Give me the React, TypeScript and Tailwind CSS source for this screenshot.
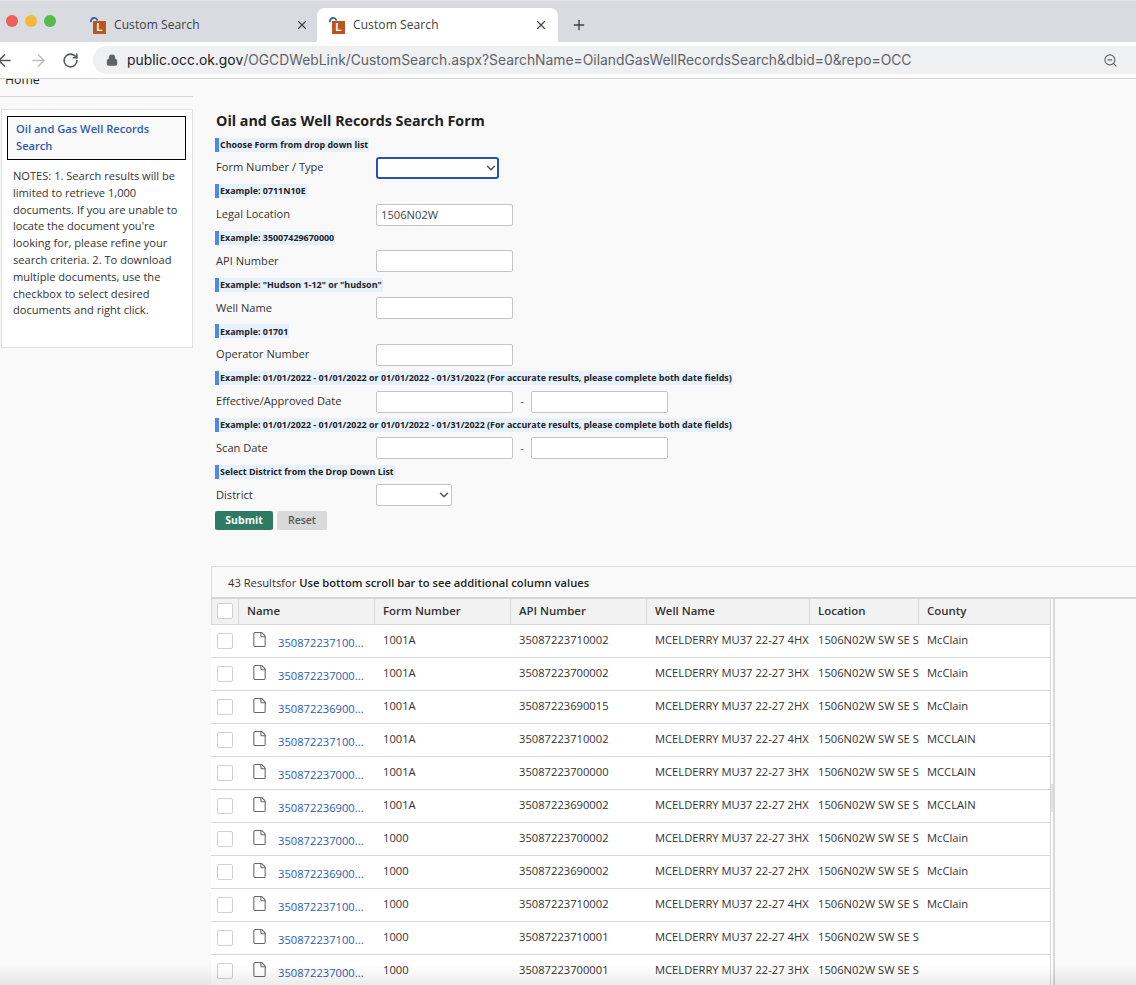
import { ArrowLeft, ArrowRight, ChevronDown, File, Lock, Plus, RotateCw, X, ZoomOut } from "lucide-react";

const rows = [
  ["350872237100...", "1001A", "35087223710002", "MCELDERRY MU37 22-27 4HX", "McClain"],
  ["350872237000...", "1001A", "35087223700002", "MCELDERRY MU37 22-27 3HX", "McClain"],
  ["350872236900...", "1001A", "35087223690015", "MCELDERRY MU37 22-27 2HX", "McClain"],
  ["350872237100...", "1001A", "35087223710002", "MCELDERRY MU37 22-27 4HX", "MCCLAIN"],
  ["350872237000...", "1001A", "35087223700000", "MCELDERRY MU37 22-27 3HX", "MCCLAIN"],
  ["350872236900...", "1001A", "35087223690002", "MCELDERRY MU37 22-27 2HX", "MCCLAIN"],
  ["350872237000...", "1000", "35087223700002", "MCELDERRY MU37 22-27 3HX", "McClain"],
  ["350872236900...", "1000", "35087223690002", "MCELDERRY MU37 22-27 2HX", "McClain"],
  ["350872237100...", "1000", "35087223710002", "MCELDERRY MU37 22-27 4HX", "McClain"],
  ["350872237100...", "1000", "35087223710001", "MCELDERRY MU37 22-27 4HX", ""],
  ["350872237000...", "1000", "35087223700001", "MCELDERRY MU37 22-27 3HX", ""],
];

const gridCols = "grid grid-cols-[28px_136px_136px_136px_163px_109px_131px]";
const inputClass = "w-[137px] h-[22px] border border-[#c4c4c4] rounded-[2px] bg-white px-[4px] text-[11.2px] text-[#444] outline-none";
const dateHint = "Example: 01/01/2022 - 01/01/2022 or 01/01/2022 - 01/31/2022 (For accurate results, please complete both date fields)";

const Favicon = () => (
  <span className="relative block w-[17px] h-[18px] shrink-0">
    <svg width="9" height="9" viewBox="0 0 9 9" className="absolute left-0 top-0">
      <path d="M1 6 A3.2 3.2 0 1 1 7.5 4.5" fill="none" stroke="#2f5fa8" strokeWidth="1.8" />
    </svg>
    <span className="absolute left-[3px] top-[5px] w-[13px] h-[13px] bg-[#b9551f] flex items-center justify-center text-white text-[10px] leading-none font-bold font-['Liberation_Sans',sans-serif]">
      L
    </span>
  </span>
);

const Tab = ({ active }: { active: boolean }) => (
  <div className={`h-[34px] flex items-center pl-[12px] rounded-t-[8px] ${active ? "w-[241px] pr-[10px] bg-white" : "w-[239px] pr-[8px]"}`}>
    <Favicon />
    <span className="ml-[7px] text-[12px] tracking-[0.1px] text-[#3c4043]">Custom Search</span>
    <X size={14} strokeWidth={2} className="ml-auto text-[#45484c]" />
  </div>
);

const Hint = ({ text }: { text: string }) => (
  <div className="flex w-fit h-[14px] items-center bg-[#e7f1fd] border-l-[4px] border-[#4a8af0] pl-[1px] pr-[1px] text-[8.94px] font-bold text-[#222] whitespace-nowrap">
    {text}
  </div>
);

const FormRow = ({ label, first, children }: { label: string; first?: boolean; children: React.ReactNode }) => (
  <div className={`flex items-center h-[23px] ${first ? "mt-[4px] mb-[5px]" : "mt-[5px] mb-[4.76px]"}`}>
    <span className="w-[161px] pl-[1px] text-[11.1px] text-[#333]">{label}</span>
    {children}
  </div>
);

const SelectBox = ({ className }: { className: string }) => (
  <div className="relative">
    <select className={`appearance-none block h-[22px] bg-white outline-none ${className}`} />
    <ChevronDown size={14} strokeWidth={2.6} className="absolute right-[1px] top-[4px] text-[#555] pointer-events-none" />
  </div>
);

const DateInputs = () => (
  <>
    <input className={inputClass} />
    <span className="w-[18px] text-center text-[11px] text-[#555]">-</span>
    <input className={inputClass} />
  </>
);

const Check = () => <span className="block w-[16px] h-[16px] bg-white border border-[#d0d0d0] rounded-[2px]" />;

export default function App() {
  return (
    <div className="relative w-[1136px] h-[985px] overflow-hidden bg-[#f9f9f9] font-['Open_Sans',sans-serif]">
      <div className="h-[42px] bg-[#dadbe0] border-t border-[#e8e8ea] flex items-end">
        <div className="w-[78px] h-full flex items-start gap-[7px] pl-[6px] pt-[14px]">
          <span className="w-[12px] h-[12px] rounded-full bg-[#ee5f55]" />
          <span className="w-[12px] h-[12px] rounded-full bg-[#f5b736]" />
          <span className="w-[12px] h-[12px] rounded-full bg-[#54bd48]" />
        </div>
        <Tab active={false} />
        <Tab active={true} />
        <Plus size={16} strokeWidth={2} className="ml-[13px] mb-[9px] text-[#3c4043]" />
      </div>

      <div className="h-[37px] bg-white border-b border-[#d4d4d4] flex items-start pt-[4px]">
        <div className="w-[93px] h-[28px] flex items-center">
          <ArrowLeft size={19} strokeWidth={2} className="ml-[-5px] text-[#55585c]" />
          <ArrowRight size={19} strokeWidth={2} className="ml-[15px] text-[#bcbec1]" />
          <RotateCw size={17} strokeWidth={2.2} className="ml-[14px] text-[#55585c]" />
        </div>
        <div className="w-[1043px] h-[28px] bg-[#eff0f2] rounded-l-[14px] flex items-center pl-[13px] font-['Inter',sans-serif] text-[13.87px]">
          <Lock size={12} strokeWidth={2.5} fill="#5f6368" className="text-[#5f6368]" />
          <span className="ml-[9px] text-[#202124] whitespace-nowrap">public.occ.ok.gov</span>
          <span className="text-[#5f6368] whitespace-nowrap">/OGCDWebLink/CustomSearch.aspx?SearchName=OilandGasWellRecordsSearch&amp;dbid=0&amp;repo=OCC</span>
          <ZoomOut size={15} strokeWidth={1.8} className="ml-auto mr-[18px] text-[#5f6368]" />
        </div>
      </div>

      <div className="flex">
        <aside className="w-[211px] shrink-0">
          <div className="w-[193px] h-[18px] border-b border-[#d8d8d8] overflow-hidden">
            <div className="mt-[-7px] pl-[5px] text-[12.3px] leading-[16px] text-[#222]">Home</div>
          </div>
          <div className="mt-[12px] ml-[1px] w-[192px] h-[239px] bg-white border border-[#dfdfdf] pt-[6px] pl-[5px] pr-[6px]">
            <div className="h-[44px] bg-[#f9f9f9] border border-black pl-[8px] pt-[3px] text-[11.15px] leading-[17px] font-semibold text-[#2e5cb2]">
              Oil and Gas Well Records Search
            </div>
            <p className="mt-[8px] pl-[6px] text-[11.1px] leading-[16.8px] text-[#333]">
              NOTES: 1. Search results will be limited to retrieve 1,000 documents. If you are unable to locate the document you're looking for, please refine your search criteria. 2. To download multiple documents, use the checkbox to select desired documents and right click.
            </p>
          </div>
        </aside>

        <main className="flex-1 min-w-0">
          <div className="pl-[4px] pt-[32px]">
            <h1 className="pl-[1px] text-[14.3px] leading-[20px] font-bold text-[#222]">Oil and Gas Well Records Search Form</h1>
            <div className="mt-[7px]"><Hint text="Choose Form from drop down list" /></div>
            <FormRow label="Form Number / Type" first>
              <SelectBox className="w-[123px] border-2 border-[#2a4fb0] rounded-[3px]" />
            </FormRow>
            <Hint text="Example: 0711N10E" />
            <FormRow label="Legal Location">
              <input className={inputClass} defaultValue="1506N02W" />
            </FormRow>
            <Hint text="Example: 35007429670000" />
            <FormRow label="API Number">
              <input className={inputClass} />
            </FormRow>
            <Hint text={'Example: "Hudson 1-12" or "hudson"'} />
            <FormRow label="Well Name">
              <input className={inputClass} />
            </FormRow>
            <Hint text="Example: 01701" />
            <FormRow label="Operator Number">
              <input className={inputClass} />
            </FormRow>
            <Hint text={dateHint} />
            <FormRow label="Effective/Approved Date">
              <DateInputs />
            </FormRow>
            <Hint text={dateHint} />
            <FormRow label="Scan Date">
              <DateInputs />
            </FormRow>
            <Hint text="Select District from the Drop Down List" />
            <FormRow label="District">
              <SelectBox className="w-[76px] border border-[#c4c4c4] rounded-[2px]" />
            </FormRow>
            <div className="flex gap-[4px]">
              <button className="w-[58px] h-[19px] rounded-[2px] bg-[#2f7a62] text-white text-[10.5px] font-bold">Submit</button>
              <button className="w-[50px] h-[19px] rounded-[2px] bg-[#d9d9d9] text-[#555] text-[10.5px] font-semibold">Reset</button>
            </div>
          </div>

          <div className="mt-[35.72px] h-[33px] border-t border-l border-b-2 border-[#dcdcdc] border-b-[#d6d6d6] flex items-center pl-[16px] pt-[2px] text-[11.2px] text-[#333] whitespace-nowrap">
            43 Resultsfor&nbsp;<span className="font-semibold text-[#222]">Use bottom scroll bar to see additional column values</span>
          </div>

          <div className="flex w-[844px]">
            <div className="w-[840px] border-r border-[#d8d8d8] bg-white">
              <div className={`${gridCols} h-[26px] items-center bg-[#f2f2f2] border-b border-[#d8d8d8] text-[11.45px] font-semibold text-[#333]`}>
                <div className="h-full flex items-center pl-[5px] border-l border-r border-[#d8d8d8]"><Check /></div>
                {["Name", "Form Number", "API Number", "Well Name", "Location", "County"].map((h, i) => (
                  <div key={h} className={`h-full flex items-center pl-[8px] pb-[2px] ${i < 5 ? "border-r border-[#d8d8d8]" : ""}`}>{h}</div>
                ))}
              </div>
              {rows.map((r, i) => (
                <div key={i} className={`${gridCols} h-[33px] items-center border-b border-[#d8d8d8] text-[11.2px] text-[#333] whitespace-nowrap`}>
                  <div className="pl-[6px]"><Check /></div>
                  <div className="flex items-center pl-[12px]">
                    <File size={17} strokeWidth={1.5} className="text-[#666] mt-[-2px]" />
                    <span className="ml-[10px] mt-[4px] text-[#2e5cb2]">{r[0]}</span>
                  </div>
                  <div className="pl-[8px] mb-[2px]">{r[1]}</div>
                  <div className="pl-[8px] mb-[2px]">{r[2]}</div>
                  <div className="pl-[8px] mb-[2px]">{r[3]}</div>
                  <div className="pl-[8px] mb-[2px]">1506N02W SW SE S</div>
                  <div className="pl-[8px] mb-[2px]">{r[4]}</div>
                </div>
              ))}
            </div>
            <div className="relative w-[4px] bg-white border-r-[2px] border-[#d9d9d9]">
              <div className="absolute left-0 top-[185px] w-[2px] h-[28px] bg-[#e2e2e2]" />
            </div>
          </div>
        </main>
      </div>

      <div className="absolute left-0 right-0 bottom-0 h-[20px] bg-gradient-to-b from-transparent to-[#00000014] pointer-events-none" />
    </div>
  );
}
